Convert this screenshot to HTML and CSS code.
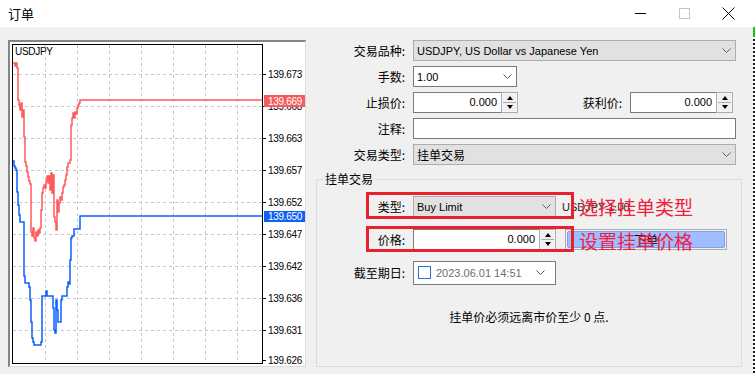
FILE: index.html
```html
<!DOCTYPE html>
<html lang="zh">
<head>
	<meta charset="UTF-8">
	<title>订单</title>
	<link rel="stylesheet" href="styles.css">
</head>
<body>
<div class="window">
	<div class="titlebar">
		<span class="title">订单</span>
		<div class="controls">
			<span class="ctl"><svg width="11" height="11"><line x1="0" y1="5.5" x2="11" y2="5.5" stroke="#000"/></svg></span>
			<span class="ctl"><svg width="11" height="11"><rect x="0.5" y="0.5" width="10" height="10" fill="none" stroke="#c4c4c4"/></svg></span>
			<span class="ctl"><svg width="13" height="13"><path d="M0.5 0.5 L12.5 12.5 M12.5 0.5 L0.5 12.5" stroke="#000" fill="none"/></svg></span>
		</div>
	</div>
	<div class="main">
		<div class="chart">
			<svg width="295" height="324" viewBox="10 42 295 324">
				<g class="grid">
					<path d="M45.5 45V363 M77.5 45V363 M109.5 45V363 M141.5 45V363 M173.5 45V363 M205.5 45V363 M237.5 45V363"/>
					<path d="M13 74.5H262 M13 106.5H262 M13 138.5H262 M13 170.5H262 M13 202.5H262 M13 234.5H262 M13 266.5H262 M13 298.5H262 M13 330.5H262"/>
				</g>
				<path class="ticks" d="M263 74.5H266 M263 106.5H266 M263 138.5H266 M263 170.5H266 M263 202.5H266 M263 234.5H266 M263 266.5H266 M263 298.5H266 M263 330.5H266 M263 360.5H266"/>
				<text class="sym" x="15" y="55">USDJPY</text>
				<g class="axis">
					<text x="268" y="78">139.673</text>
					<text x="268" y="110">139.668</text>
					<text x="268" y="142">139.663</text>
					<text x="268" y="174">139.657</text>
					<text x="268" y="206">139.652</text>
					<text x="268" y="238">139.647</text>
					<text x="268" y="270">139.642</text>
					<text x="268" y="302">139.636</text>
					<text x="268" y="334">139.631</text>
					<text x="268" y="364">139.626</text>
				</g>
				<polyline class="ask" points="13,63 15,63 15,66 16,66 16,63 17,63 17,68 18,68 18,100 19,100 19,105 20,105 20,110 21,110 21,103 22,103 22,117 23,117 23,110 24,110 24,137 25,137 25,162 26,162 26,166 27,166 27,172 28,172 28,177 29,177 29,181 30,181 30,184 31,184 31,232 32,232 32,236 33,236 33,228 34,228 34,238 35,238 35,241 36,241 36,232 37,232 37,236 38,236 38,230 39,230 39,233 40,233 40,228 41,228 41,210 42,210 42,193 43,193 43,188 44,188 44,185 45,185 45,188 46,188 46,181 47,181 47,176 48,176 48,183 49,183 49,176 50,176 50,190 51,190 51,173 52,173 52,193 53,193 53,175 54,175 54,217 55,217 55,222 56,222 56,230 57,230 57,200 58,200 58,212 59,212 59,203 60,203 60,197 61,197 61,200 62,200 62,193 63,193 63,187 64,187 64,185 65,185 65,180 66,180 66,175 67,175 67,167 68,167 68,163 70,163 70,160 71,160 71,125 72,125 72,118 73,118 73,113 74,113 74,118 75,118 75,112 76,112 76,114 77,114 77,108 78,108 78,105 79,105 79,103 80,103 80,100 263,100"/>
				<polyline class="bid" points="13,161 14,161 14,166 15,166 15,168 16,168 16,170 17,170 17,192 18,192 18,205 19,205 19,215 20,215 20,222 24,222 24,276 25,276 25,283 29,283 29,287 30,287 30,300 31,300 31,322 32,322 32,338 33,338 33,342 34,342 34,345 41,345 41,342 42,342 42,296 46,296 46,291 47,291 47,296 53,296 53,308 54,308 54,330 55,330 55,333 56,333 56,300 57,300 57,310 58,310 58,322 61,322 61,300 62,300 62,296 67,296 67,287 68,287 68,282 69,282 69,284 70,284 70,260 71,260 71,238 72,238 72,236 74,236 74,229 80,229 80,216 263,216"/>
				<rect x="12.5" y="44.5" width="250" height="319" fill="none" stroke="#000"/>
				<rect class="tag-ask" x="264" y="95" width="41" height="12"/>
				<text class="tag" x="268" y="105">139.669</text>
				<rect class="tag-bid" x="264" y="211" width="41" height="11"/>
				<text class="tag" x="268" y="220">139.650</text>
			</svg>
		</div>
		<div class="form">
			<div class="rows">
				<div class="row">
					<span class="lbl">交易品种:</span>
					<div class="select full"><span class="val">USDJPY, US Dollar vs Japanese Yen</span><svg class="chev" width="9" height="5"><polyline points="0.5,0.5 4.5,4.5 8.5,0.5"/></svg></div>
				</div>
				<div class="row">
					<span class="lbl">手数:</span>
					<div class="combo lots"><span class="val">1.00</span><svg class="chev" width="9" height="5"><polyline points="0.5,0.5 4.5,4.5 8.5,0.5"/></svg></div>
				</div>
				<div class="row">
					<span class="lbl">止损价:</span>
					<div class="num sl"><span class="numval">0.000</span><span class="spin"><i class="up"></i><i class="down"></i></span></div>
					<span class="lbl tp-lbl">获利价:</span>
					<div class="num tp"><span class="numval">0.000</span><span class="spin"><i class="up"></i><i class="down"></i></span></div>
				</div>
				<div class="row">
					<span class="lbl">注释:</span>
					<div class="input full"></div>
				</div>
				<div class="row">
					<span class="lbl">交易类型:</span>
					<div class="select full"><span class="val cjk">挂单交易</span><svg class="chev" width="9" height="5"><polyline points="0.5,0.5 4.5,4.5 8.5,0.5"/></svg></div>
				</div>
			</div>
			<fieldset class="group">
				<legend>挂单交易</legend>
				<div class="grow">
					<span class="lbl glbl">类型:</span>
					<div class="select short"><span class="val">Buy Limit</span><svg class="chev" width="9" height="5"><polyline points="0.5,0.5 4.5,4.5 8.5,0.5"/></svg></div>
					<span class="info">USDJPY 1.00</span>
				</div>
				<div class="grow">
					<span class="lbl glbl">价格:</span>
					<div class="num short"><span class="numval">0.000</span><span class="spin"><i class="up"></i><i class="down"></i></span></div>
					<div class="btn"><span class="btn-face">下单</span></div>
				</div>
				<div class="grow">
					<span class="lbl glbl">截至期日:</span>
					<div class="date short">
						<span class="check"></span>
						<span class="dateval">2023.06.01 14:51</span>
						<svg class="chev" width="9" height="5"><polyline points="0.5,0.5 4.5,4.5 8.5,0.5"/></svg>
					</div>
				</div>
				<p class="note">挂单价必须远离市价至少 0 点.</p>

				<div class="mark mark-type"></div>
				<div class="mark mark-price"></div>
				<span class="memo memo-type">选择挂单类型</span>
				<span class="memo memo-price">设置挂单价格</span>
			</fieldset>
		</div>
	</div>
</div>
<div class="edge"></div>
</body>
</html>
```

FILE: styles.css
```css
*{
	margin: 0;
	padding: 0;
	box-sizing: border-box;
}
body{
	width: 755px;
	height: 374px;
	overflow: hidden;
	display: flex;
	background: #fff;
	font-family: "Noto Sans CJK SC", "Liberation Sans", sans-serif;
	font-size: 12px;
	color: #000;
}
.window{
	width: 753px;
	height: 374px;
	display: flex;
	flex-direction: column;
	background: #f0f0f0;
}
.edge{
	width: 2px;
	height: 374px;
	background: repeating-linear-gradient(#1a1a1a 0 2px, #fff 2px 4px);
	border-top: 27px solid #fff;
}
.edge::before{
	content: "";
	display: block;
	height: 10px;
	background: #19c219;
}

/* title bar */
.titlebar{
	height: 27px;
	background: #fff;
	display: flex;
	align-items: center;
	justify-content: space-between;
}
.title{
	padding-left: 8px;
	font-size: 13px;
	line-height: 16px;
}
.controls{
	display: flex;
	margin-right: 3px;
	align-self: stretch;
}
.ctl{
	width: 44px;
	display: flex;
	align-items: center;
	justify-content: center;
}

/* layout */
.main{
	flex: 1;
	display: flex;
	gap: 10px;
	padding: 13px 0 7px 8px;
}
.chart{
	width: 298px;
	background: #fff;
	border-top: 2px solid #858585;
	border-left: 2px solid #858585;
	border-right: 1px solid #dcdcdc;
	border-bottom: 1px solid #dcdcdc;
}
.chart svg{
	display: block;
}
.grid path{
	stroke: #c6c6c6;
	stroke-dasharray: 3 3;
	fill: none;
}
.ticks{
	stroke: #000;
}
.sym,
.axis text,
.tag{
	font-family: "Liberation Sans", sans-serif;
	font-size: 10px;
	letter-spacing: -0.3px;
}
.axis text{
	fill: #000;
}
.tag{
	fill: #fff;
}
.ask{
	fill: none;
	stroke: #ff5a5a;
	stroke-width: 1.5;
}
.bid{
	fill: none;
	stroke: #0a60ff;
	stroke-width: 1.5;
}
.tag-ask{
	fill: #f65c5c;
}
.tag-bid{
	fill: #0e63f5;
}

/* form */
.form{
	width: 426px;
	display: flex;
	flex-direction: column;
}
.rows{
	display: flex;
	flex-direction: column;
	gap: 5px;
	padding-right: 6px;
}
.row,
.grow{
	display: flex;
	align-items: center;
	gap: 8px;
	height: 21px;
}
.lbl{
	width: 89px;
	text-align: right;
	line-height: 16px;
	white-space: nowrap;
}
.glbl{
	width: 88px;
}
.tp-lbl{
	width: auto;
	margin-left: auto;
}
.val,
.numval,
.dateval,
.info{
	font-family: "Liberation Sans", sans-serif;
	font-size: 11px;
}
.val.cjk{
	font-family: "Noto Sans CJK SC", sans-serif;
	font-size: 12px;
}
.select,
.combo,
.input,
.num,
.date{
	height: 21px;
	display: flex;
	align-items: center;
}
.select{
	background: #e1e1e1;
	border: 1px solid #adadad;
	justify-content: space-between;
	padding: 0 4px 0 3px;
}
.combo{
	background: #fff;
	border: 1px solid #7a7a7a;
	justify-content: space-between;
	padding: 0 4px 0 3px;
}
.input{
	background: #fff;
	border: 1px solid #7a7a7a;
}
.full{
	width: 323px;
}
.lots{
	width: 104px;
}
.short{
	width: 143px;
}
.chev polyline{
	fill: none;
	stroke: #606060;
}
.num{
	background: #fff;
}
.numval{
	flex: 1;
	height: 21px;
	line-height: 19px;
	text-align: right;
	padding-right: 4px;
	border: 1px solid #7a7a7a;
	border-right: none;
}
.sl{
	width: 105px;
}
.tp{
	width: 103px;
	margin-right: 3px;
}
.spin{
	width: 17px;
	height: 21px;
	border: 1px solid #acacac;
	display: flex;
	flex-direction: column;
	background: #f7f7f7;
	padding: 1px;
}
.spin i{
	flex: 1;
	display: flex;
	align-items: center;
	justify-content: center;
	background: #f0f0f0;
}
.spin i + i{
	border-top: 1px solid #acacac;
}
.spin i::before{
	content: "";
	border-left: 3px solid transparent;
	border-right: 3px solid transparent;
}
.up::before{
	border-bottom: 4px solid #000;
}
.down::before{
	border-top: 4px solid #000;
}

/* pending group */
.group{
	position: relative;
	flex: 1;
	margin-top: 6px;
	border: 1px solid #dcdcdc;
	padding: 9px 0 0 0;
	display: flex;
	flex-direction: column;
	gap: 12px;
}
.group legend{
	margin-left: 6px;
	padding: 0 2px;
	line-height: 16px;
}
.grow:last-of-type{
	height: 24px;
}
.info{
	margin-left: -2px;
	color: #222;
}
.btn{
	width: 162px;
	height: 21px;
	margin-left: 1px;
	border: 1px solid #adadad;
	padding: 1px;
	background: #f0f0f0;
}
.btn-face{
	display: flex;
	height: 100%;
	align-items: center;
	justify-content: center;
	background: #a0bdff;
	border: 1px solid #7e9ff4;
	border-radius: 2px;
	line-height: 14px;
}
.date{
	height: 24px;
	background: #fff;
	border: 1px solid #7a7a7a;
	padding: 0 10px 0 4px;
	gap: 5px;
}
.check{
	width: 13px;
	height: 13px;
	border: 1px solid #2a72d6;
	background: #fff;
}
.dateval{
	flex: 1;
	color: #6d6d6d;
}
.date .chev polyline{
	stroke: #505050;
}
.note{
	margin-top: 14px;
	text-align: center;
	line-height: 16px;
}

/* red annotations drawn over the dialog */
.mark{
	position: absolute;
	left: 49px;
	width: 208px;
	border: 3px solid #e8222c;
}
.mark-type{
	top: 5px;
	height: 27px;
}
.mark-price{
	top: 39px;
	height: 26px;
}
.memo{
	position: absolute;
	left: 262px;
	font-size: 19px;
	line-height: 22px;
	color: #f0203c;
	white-space: nowrap;
}
.memo-type{
	top: 9px;
}
.memo-price{
	top: 43px;
}
```
